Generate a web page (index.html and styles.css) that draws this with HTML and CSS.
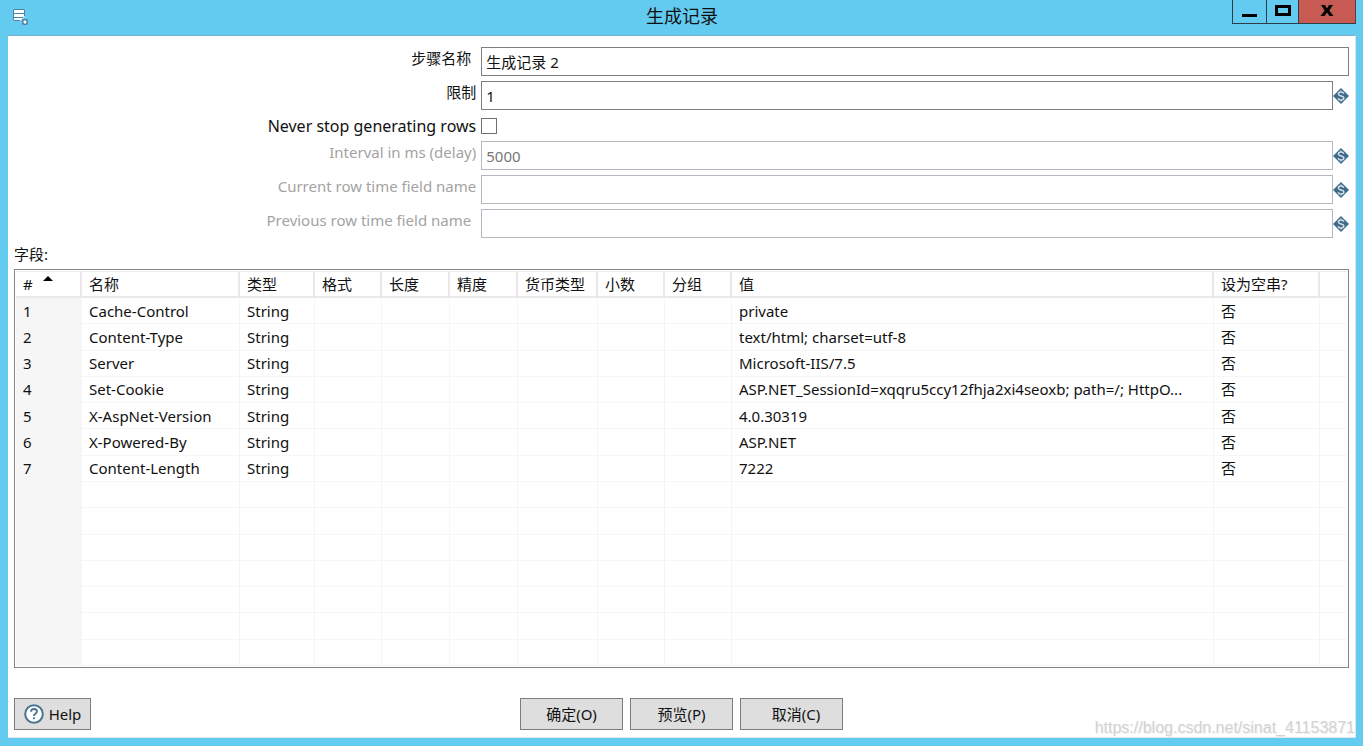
FILE: index.html
```html
<!DOCTYPE html>
<html lang="zh-CN">
<head>
<meta charset="utf-8">
<title>生成记录</title>
<link rel="stylesheet" href="styles.css">
</head>
<body>
<svg class="defs" aria-hidden="true">
  <symbol id="var" viewBox="0 0 16 16">
    <path d="M8 0 16 8 8 16 0 8Z" fill="#3f6b8b"/>
    <path d="M10.800 5.800C10.400 4.600 9.300 4 8 4 6.500 4 5.400 4.800 5.400 6 5.400 8.600 10.800 7.400 10.800 10 10.800 11.300 9.600 12 8.100 12 6.600 12 5.500 11.400 5.100 10.200" fill="none" stroke="#d3dee6" stroke-width="1.500"/>
    <path d="M8 2.500V4M8 12V13.500" stroke="#d3dee6" stroke-width="1.200"/>
  </symbol>
</svg>
<div class="window">
  <header class="titlebar">
    <svg class="app-icon" viewBox="0 0 17 18" aria-hidden="true">
      <path d="M1 1H13V8L8 13H1Z" fill="#fff"/>
      <path d="M12.500 8V1.500H1.500V12.500H8M1 5.500H13M1 9.500H11" fill="none" stroke="#4b83a8"/>
      <circle cx="13" cy="14" r="2.300" fill="#fff" stroke="#4b7796" stroke-width="1.300"/>
      <path d="M10.500 11.500 11.500 12.500M15.500 11.500 14.500 12.500M10.500 16.500 11.500 15.500M15.500 16.500 14.500 15.500" stroke="#4b7796"/>
    </svg>
    <h1 class="title">生成记录</h1>
    <div class="controls">
      <button class="control minimize" type="button" aria-label="最小化"><svg viewBox="0 0 16 14"><path d="M0 11.500H15" stroke="#000" stroke-width="3"/></svg></button>
      <button class="control maximize" type="button" aria-label="最大化"><svg viewBox="0 0 16 14"><path d="M1.500 2.500H14.500V10.500H1.500Z" fill="none" stroke="#000" stroke-width="3"/></svg></button>
      <button class="control close" type="button" aria-label="关闭"><svg viewBox="0 0 16 14"><path d="M2 1H6L8 4.500 10 1H14L10.300 6.500 14.500 12H10.500L8 8.500 5.500 12H1.500L5.700 6.500Z"/></svg></button>
    </div>
  </header>
  <main class="client">
    <form class="form">
      <label class="label inset" for="step">步骤名称</label>
      <div class="field"><input class="text" id="step" type="text" value="生成记录 2"></div>
      <label class="label" for="limit">限制</label>
      <div class="field"><input class="text" id="limit" type="text" value="1"><svg class="var"><use href="#var"/></svg></div>
      <label class="label check-label" for="never">Never stop generating rows</label>
      <div class="field"><input class="check" id="never" type="checkbox"></div>
      <label class="label off" for="interval">Interval in ms (delay)</label>
      <div class="field"><input class="text" id="interval" type="text" value="5000" disabled><svg class="var"><use href="#var"/></svg></div>
      <label class="label off" for="current">Current row time field name</label>
      <div class="field"><input class="text" id="current" type="text" disabled><svg class="var"><use href="#var"/></svg></div>
      <label class="label off inset" for="previous">Previous row time field name</label>
      <div class="field"><input class="text" id="previous" type="text" disabled><svg class="var"><use href="#var"/></svg></div>
    </form>
    <h2 class="caption" id="fields">字段:</h2>
    <div class="grid">
      <table class="table" aria-labelledby="fields">
        <colgroup><col class="c-num"><col class="c-name"><col class="c-type"><col class="c-short"><col class="c-size"><col class="c-size"><col class="c-cur"><col class="c-short"><col class="c-short"><col><col class="c-null"><col class="c-end"></colgroup>
        <thead><tr><th># <svg class="sort" viewBox="0 0 10 5"><path d="M5 0 10 5H0Z"/></svg></th><th>名称</th><th>类型</th><th>格式</th><th>长度</th><th>精度</th><th>货币类型</th><th>小数</th><th>分组</th><th>值</th><th>设为空串?</th><th></th></tr></thead>
        <tbody>
          <tr><td>1</td><td>Cache-Control</td><td>String</td><td></td><td></td><td></td><td></td><td></td><td></td><td>private</td><td>否</td><td></td></tr>
          <tr><td>2</td><td>Content-Type</td><td>String</td><td></td><td></td><td></td><td></td><td></td><td></td><td>text/html; charset=utf-8</td><td>否</td><td></td></tr>
          <tr><td>3</td><td>Server</td><td>String</td><td></td><td></td><td></td><td></td><td></td><td></td><td>Microsoft-IIS/7.5</td><td>否</td><td></td></tr>
          <tr><td>4</td><td>Set-Cookie</td><td>String</td><td></td><td></td><td></td><td></td><td></td><td></td><td>ASP.NET_SessionId=xqqru5ccy12fhja2xi4seoxb; path=/; HttpO...</td><td>否</td><td></td></tr>
          <tr><td>5</td><td>X-AspNet-Version</td><td>String</td><td></td><td></td><td></td><td></td><td></td><td></td><td>4.0.30319</td><td>否</td><td></td></tr>
          <tr><td>6</td><td>X-Powered-By</td><td>String</td><td></td><td></td><td></td><td></td><td></td><td></td><td>ASP.NET</td><td>否</td><td></td></tr>
          <tr><td>7</td><td>Content-Length</td><td>String</td><td></td><td></td><td></td><td></td><td></td><td></td><td>7222</td><td>否</td><td></td></tr>
          <tr><td></td><td></td><td></td><td></td><td></td><td></td><td></td><td></td><td></td><td></td><td></td><td></td></tr>
          <tr><td></td><td></td><td></td><td></td><td></td><td></td><td></td><td></td><td></td><td></td><td></td><td></td></tr>
          <tr><td></td><td></td><td></td><td></td><td></td><td></td><td></td><td></td><td></td><td></td><td></td><td></td></tr>
          <tr><td></td><td></td><td></td><td></td><td></td><td></td><td></td><td></td><td></td><td></td><td></td><td></td></tr>
          <tr><td></td><td></td><td></td><td></td><td></td><td></td><td></td><td></td><td></td><td></td><td></td><td></td></tr>
          <tr><td></td><td></td><td></td><td></td><td></td><td></td><td></td><td></td><td></td><td></td><td></td><td></td></tr>
          <tr><td></td><td></td><td></td><td></td><td></td><td></td><td></td><td></td><td></td><td></td><td></td><td></td></tr>
        </tbody>
      </table>
    </div>
    <footer class="footer">
      <button class="button help" type="button"><svg class="help-icon" viewBox="0 0 20 20" aria-hidden="true"><circle cx="10" cy="10" r="8.800" fill="#fff" stroke="#4a7490" stroke-width="2"/><path d="M7 7.800C7 6 8.300 5 10 5 11.700 5 13 6 13 7.500 13 9.500 10 9.600 10 12M10 13.300V15.200" fill="none" stroke="#4a7490" stroke-width="1.800"/></svg>Help</button>
      <div class="actions">
        <button class="button" type="button">确定(O)</button>
        <button class="button" type="button">预览(P)</button>
        <button class="button cancel" type="button">取消(C)</button>
      </div>
    </footer>
  </main>
  <div class="watermark">https://blog.csdn.net/sinat_41153871</div>
</div>
</body>
</html>
```
FILE: styles.css
```css
* { box-sizing: border-box; }

body {
  margin: 0;
  background: #63caf0;
  color: #111;
  font: 15px/20px "Noto Sans", "Noto Sans CJK SC", sans-serif;
}

.defs { position: absolute; width: 0; height: 0; }

.window {
  position: relative;
  display: flex;
  flex-direction: column;
  min-height: 100vh;
  padding: 0 7px 8px 8px;
}

.titlebar {
  display: grid;
  grid-template-columns: 1fr auto 1fr;
  height: 35px;
}

.app-icon { width: 17px; height: 18px; margin: 8px 0 0 4px; }

.title {
  margin: 4px 0 0;
  font-size: 18px;
  font-weight: 400;
  line-height: 24px;
}

.controls { display: flex; justify-self: end; height: 24px; }

.control {
  width: 34px;
  padding: 0;
  border: 1px solid #2b3d46;
  border-top: 0;
  border-right: 0;
  background: transparent;
}

.control svg { display: block; width: 16px; height: 14px; margin: 0 auto 2px; }
.maximize { width: 32px; }
.close { width: 58px; border-right: 1px solid #59403f; background: #c75a52; }

.client {
  display: flex;
  flex: 1;
  flex-direction: column;
  padding: 11px 6px 7px;
  background: #fff;
  border: 1px solid #dfe5e8;
  border-width: 1px 1px 1px 0;
  border-top-color: #7bb1cc;
}

.form {
  display: grid;
  grid-template-columns: 35% 1fr;
  row-gap: 5px;
}

.label {
  padding: 1px 5px 0 0;
  text-align: right;
}

.inset { padding-right: 10px; }
.off { color: #a3a3a3; }
.check-label { font-size: 16px; }

.field { display: flex; align-items: center; }

.text {
  flex: 1;
  min-width: 0;
  height: 29px;
  padding: 0 4px;
  border: 1px solid #7f7f7f;
  border-radius: 0;
  background: #fff;
  color: #111;
  font: inherit;
}

.text:disabled { border-color: #b5b8c0; color: #777; }

.var { width: 16px; height: 16px; }

.check {
  width: 16px;
  height: 16px;
  margin: 0;
  border: 1px solid #707070;
  background: #fff;
  appearance: none;
}

.caption {
  margin: 6px 0 5px;
  font-size: 15px;
  font-weight: 400;
}

.grid {
  display: flex;
  flex: 1;
  padding: 1px;
  border: 1px solid #82848e;
}

.table {
  width: 100%;
  border-collapse: separate;
  border-spacing: 0;
  table-layout: fixed;
}

.c-num { width: 66px; }
.c-name { width: 158px; }
.c-type { width: 75px; }
.c-short { width: 67px; }
.c-size { width: 68px; }
.c-cur { width: 80px; }
.c-null { width: 106px; }
.c-end { width: 27px; }

th, td {
  padding: 0 7px;
  overflow: hidden;
  text-align: left;
  white-space: nowrap;
}

th {
  height: 27px;
  border-top: 1px solid #efecee;
  border-right: 2px solid #ebe6e9;
  border-bottom: 2px solid #ece8ea;
  font-weight: 400;
}

th:last-child { border-right: 0; }

td {
  height: 26px;
  border-right: 1px solid #faf2f4;
  border-bottom: 1px solid #f8f5f6;
}

td:first-child { border-color: #f6f6f6; background: #f6f6f6; }
td:last-child { border-right: 0; }

.sort { width: 10px; height: 5px; margin-left: 6px; vertical-align: 9px; }

.footer {
  display: grid;
  grid-template-columns: 1fr auto 1fr;
  margin-top: 30px;
}

.actions { display: flex; gap: 7px; }

.button {
  width: 103px;
  height: 32px;
  padding: 0;
  border: 1px solid #7e7c80;
  background: #dedede;
  color: #111;
  font: inherit;
}

.cancel { padding-left: 9px; }

.help {
  display: flex;
  gap: 5px;
  align-items: center;
  justify-content: center;
  width: 77px;
}

.help-icon { width: 20px; height: 20px; }

.watermark {
  position: absolute;
  right: 8px;
  bottom: 8px;
  color: #d2d2d2;
  font: 16px/20px "Liberation Sans", sans-serif;
  text-shadow: 1px 1px 0 #f3f3f3;
}
```
